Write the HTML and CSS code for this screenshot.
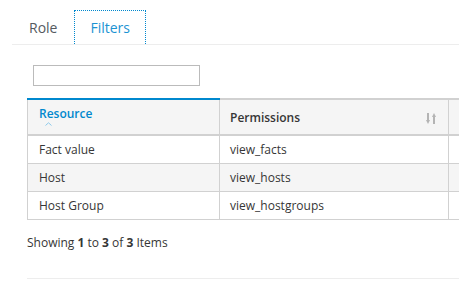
FILE: index.html
```html
<!DOCTYPE html>
<html lang="en">

<head>
    <meta charset="UTF-8" />
    <title>Role Filters</title>
    <meta name="viewport" content="width=device-width, initial-scale=1" />
    <link rel="stylesheet" href="styles.css">
</head>

<body>
    <div class="page">
        <ul class="tabs">
            <li><a class="tab">Role</a></li>
            <li><a class="tab tab-active">Filters</a></li>
        </ul>

        <div class="content">
            <div class="search">
                <input type="text" class="search-input" />
            </div>

            <div class="grid-wrap">
                <table class="grid">
                    <thead>
                        <tr>
                            <th class="col-resource sorted">
                                <span class="th-label">Resource</span>
                                <svg class="caret" width="7" height="4" viewBox="0 0 7 4">
                                    <path d="M0.5 3.5 L3.5 0.8 L6.5 3.5" fill="none" stroke="#8cc9ea" stroke-width="1" />
                                </svg>
                            </th>
                            <th class="col-perms">
                                <span class="th-label">Permissions</span>
                                <svg class="sort-icon" width="11" height="11" viewBox="0 0 11 11">
                                    <path d="M2 0 V8" stroke="#b4b4b4" stroke-width="2" />
                                    <path d="M0 7 L2 11 L4 7 Z" fill="#b4b4b4" />
                                    <path d="M8 3 V11" stroke="#b4b4b4" stroke-width="2" />
                                    <path d="M6 4 L8 0 L10 4 Z" fill="#b4b4b4" />
                                </svg>
                            </th>
                            <th class="col-extra"></th>
                        </tr>
                    </thead>
                    <tbody>
                        <tr>
                            <td>Fact value</td>
                            <td>view_facts</td>
                            <td></td>
                        </tr>
                        <tr>
                            <td>Host</td>
                            <td>view_hosts</td>
                            <td></td>
                        </tr>
                        <tr>
                            <td>Host Group</td>
                            <td>view_hostgroups</td>
                            <td></td>
                        </tr>
                    </tbody>
                </table>
            </div>

            <div class="pager">
                Showing <b>1</b> to <b>3</b> of <b>3</b> Items
            </div>
        </div>
    </div>
</body>

</html>
```

FILE: styles.css
```css
body,
html {
    margin: 0;
    padding: 0;
    font-family: "Open Sans", "Liberation Sans", sans-serif;
    color: #363636;
    background-color: #fff;
    overflow: hidden;
}

.page {
    padding-top: 10px;
}

.tabs {
    list-style: none;
    margin: 0 0 0 12px;
    padding: 0;
    display: flex;
    border-bottom: 1px solid #ededed;
}

.tab {
    display: block;
    font-size: 14px;
    line-height: 20px;
    padding: 7px 16px 6px 16px;
    border: 1px solid transparent;
    border-bottom: none;
    color: #555a60;
    cursor: pointer;
}

.tab-active {
    color: #1c93d3;
    border: 1px dotted #0088ce;
    border-bottom: none;
    padding-left: 15px;
    padding-right: 15px;
}

.content {
    padding-left: 27px;
}

.search {
    padding: 20px 0 12px 6px;
}

.search-input {
    display: block;
    width: 167px;
    height: 21px;
    box-sizing: border-box;
    border: 1px solid #bbb;
    margin: 0;
    padding: 2px 6px;
    font-size: 12px;
}

.grid-wrap {
    overflow: hidden;
}

.grid {
    border-collapse: collapse;
    width: 560px;
    font-size: 12px;
    border-left: 1px solid #d1d1d1;
}

.grid th {
    background-color: #f5f5f5;
    border-top: 2px solid #d1d1d1;
    border-bottom: 2px solid #d1d1d1;
    border-right: 1px solid #d1d1d1;
    text-align: left;
    font-weight: 600;
    height: 36px;
    padding: 0 10px;
    box-sizing: border-box;
    position: relative;
}

.grid th.sorted {
    border-top-color: #0088ce;
    color: #0088ce;
    padding-left: 11px;
}

.col-resource {
    width: 192px;
}

.col-perms {
    width: 229px;
}

.col-resource .th-label {
    display: block;
    margin-top: -8px;
}

.caret {
    position: absolute;
    left: 17px;
    top: 22px;
}

.sort-icon {
    position: absolute;
    right: 11px;
    top: 13px;
}

.grid td {
    border-bottom: 1px solid #d1d1d1;
    border-right: 1px solid #d1d1d1;
    padding: 5px 10px 5px 11px;
    line-height: 17px;
    height: 17px;
}

.grid td + td {
    padding-left: 10px;
}

.grid tbody tr:nth-child(even) td {
    background-color: #f5f5f5;
}

.pager {
    font-size: 12px;
    padding: 14px 0 0 0;
    height: 44px;
    border-bottom: 1px solid #ededed;
}

.pager b {
    font-weight: 700;
}
```
